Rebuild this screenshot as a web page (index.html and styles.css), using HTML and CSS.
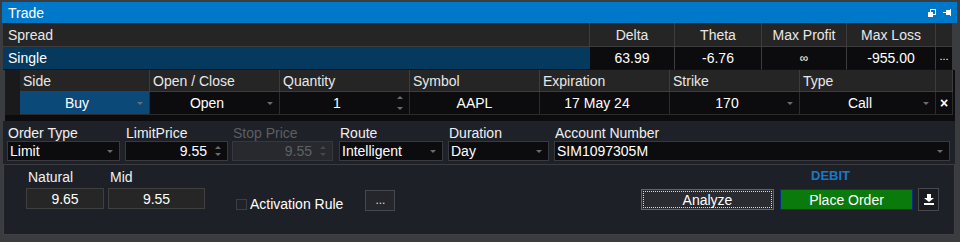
FILE: index.html
```html
<!DOCTYPE html>
<html lang="en">
<head>
    <meta charset="UTF-8">
    <title>Trade</title>
    <link rel="stylesheet" href="styles.css">
</head>
<body>

<div class="window">
    <div class="titlebar">
        <span class="title">Trade</span>
        <span class="title-icons">
            <svg width="8" height="8" viewBox="0 0 8 8"><rect x="2.5" y="0.5" width="5" height="5" fill="none" stroke="#fff"/><rect x="0" y="3" width="5" height="5" fill="#fff"/></svg>
            <svg width="8" height="7" viewBox="0 0 8 7"><rect x="0" y="3" width="3" height="1" fill="#fff"/><rect x="3" y="1" width="4" height="5" fill="#fff"/><rect x="7" y="0" width="1" height="7" fill="#fff"/></svg>
        </span>
    </div>

    <div class="summary">
        <div class="s-head s-name">Spread</div>
        <div class="s-head">Delta</div>
        <div class="s-head">Theta</div>
        <div class="s-head">Max Profit</div>
        <div class="s-head">Max Loss</div>
        <div class="s-head"></div>

        <div class="s-name s-sel">Single</div>
        <div class="s-val">63.99</div>
        <div class="s-val">-6.76</div>
        <div class="s-val s-inf">&infin;</div>
        <div class="s-val">-955.00</div>
        <div class="s-val s-more">...</div>
    </div>

    <div class="legs">
        <div class="gutter"></div>
        <div class="l-head">Side</div>
        <div class="l-head">Open / Close</div>
        <div class="l-head">Quantity</div>
        <div class="l-head">Symbol</div>
        <div class="l-head">Expiration</div>
        <div class="l-head">Strike</div>
        <div class="l-head">Type</div>
        <div class="l-head"></div>

        <div class="gutter"></div>
        <div class="l-cell l-pick l-buy">Buy<i class="caret"></i></div>
        <div class="l-cell l-pick">Open<i class="caret"></i></div>
        <div class="l-cell l-pick">1<i class="spin"><b class="up"></b><b class="down"></b></i></div>
        <div class="l-cell">AAPL</div>
        <div class="l-cell l-pick">17 May 24</div>
        <div class="l-cell l-pick">170<i class="caret"></i></div>
        <div class="l-cell l-pick">Call<i class="caret"></i></div>
        <div class="l-cell l-x">&times;</div>
    </div>

    <div class="order">
        <div class="field f-type">
            <label>Order Type</label>
            <div class="box">Limit<i class="caret"></i></div>
        </div>
        <div class="field f-limit">
            <label>LimitPrice</label>
            <div class="box num">9.55<i class="spin"><b class="up"></b><b class="down"></b></i></div>
        </div>
        <div class="field f-stop disabled">
            <label>Stop Price</label>
            <div class="box num">9.55<i class="spin"><b class="up"></b><b class="down"></b></i></div>
        </div>
        <div class="field f-route">
            <label>Route</label>
            <div class="box">Intelligent<i class="caret"></i></div>
        </div>
        <div class="field f-dur">
            <label>Duration</label>
            <div class="box">Day<i class="caret"></i></div>
        </div>
        <div class="field f-acct">
            <label>Account Number</label>
            <div class="box">SIM1097305M<i class="caret"></i></div>
        </div>
    </div>

    <div class="bottom">
        <div class="quote">
            <label>Natural</label>
            <div class="qbox">9.65</div>
        </div>
        <div class="quote q-mid">
            <label>Mid</label>
            <div class="qbox">9.55</div>
        </div>
        <div class="activation">
            <span class="check"></span>
            <span>Activation Rule</span>
        </div>
        <div class="dots">...</div>

        <div class="actions">
            <div class="debit">DEBIT</div>
            <div class="buttons">
                <div class="btn btn-analyze"><span>Analyze</span></div>
                <div class="btn btn-place">Place Order</div>
                <div class="btn-icon">
                    <svg width="10" height="11" viewBox="0 0 10 11"><path d="M3 0h4v4h3L5 8 0 4h3z" fill="#fff"/><rect x="0" y="9" width="10" height="2" fill="#fff"/></svg>
                </div>
            </div>
        </div>
    </div>
</div>

</body>
</html>
```

FILE: styles.css
```css
body {
    margin: 0;
    background: #3a3b3f;
    font-family: "Liberation Sans", Arial, sans-serif;
    font-size: 14px;
    color: #eee;
}
.window {
    width: 960px;
    height: 242px;
    box-sizing: border-box;
    padding: 2px 5px 0 2px;
    background: #3b3c40;
    overflow: hidden;
}
.titlebar {
    height: 21px;
    background: #0078c9;
    display: flex;
    align-items: center;
    justify-content: space-between;
    padding: 0 6px 0 6px;
    margin-right: -2px;
}
.title {
    color: #fff;
    font-size: 14px;
}
.title-icons {
    display: flex;
    gap: 7px;
    align-items: center;
}

/* spread summary */
.summary {
    display: grid;
    grid-template-columns: 587px 85px 87px 85px 89px 17px;
    grid-template-rows: 24px 23px;
    margin-left: 1px;
}
.summary > div {
    display: flex;
    align-items: center;
    justify-content: center;
    box-sizing: border-box;
}
.s-head {
    background: #252525;
    border-right: 1px solid #3d3d3d;
    border-bottom: 1px solid #3d3d3d;
    color: #e8e8e8;
}
.summary .s-name {
    justify-content: flex-start;
    padding-left: 5px;
}
.s-sel {
    background: #053a5e;
    color: #fff;
    border-bottom: 1px solid #111;
}
.s-val {
    background: #0c0c0e;
    color: #fff;
    border-right: 1px solid #3d3d3d;
    border-bottom: 1px solid #111;
}
.s-inf {
    font-size: 12px;
}
.s-more {
    font-size: 11px;
    align-items: flex-start !important;
    padding-top: 3px;
}

/* legs */
.legs {
    display: grid;
    grid-template-columns: 15px 130px 130px 130px 130px 130px 130px 136px 17px;
    grid-template-rows: 22px 23px;
    margin-left: 3px;
    background: #0c0c0e;
    padding-bottom: 6px;
}
.gutter {
    background: #1a1a1c;
}
.l-head {
    background: #252525;
    border-right: 1px solid #3d3d3d;
    border-bottom: 1px solid #3d3d3d;
    display: flex;
    align-items: center;
    padding-left: 3px;
    color: #e8e8e8;
}
.l-cell {
    position: relative;
    display: flex;
    align-items: center;
    justify-content: center;
    border-right: 1px solid #2c2c2c;
    border-bottom: 1px solid #2c2c2c;
    color: #fff;
}
.l-pick {
    padding-right: 15px;
}
.l-buy {
    background: #0b4a78;
}
.l-x {
    font-size: 14px;
    font-weight: bold;
}
.caret {
    position: absolute;
    right: 6px;
    top: 50%;
    margin-top: -1px;
    border-left: 3px solid transparent;
    border-right: 3px solid transparent;
    border-top: 3px solid #6c6c6c;
}
.spin {
    position: absolute;
    right: 6px;
    top: 4px;
    bottom: 4px;
    display: flex;
    flex-direction: column;
    justify-content: space-between;
}
.spin b {
    display: block;
    border-left: 3px solid transparent;
    border-right: 3px solid transparent;
}
.spin .up {
    border-bottom: 3px solid #6c6c6c;
}
.spin .down {
    border-top: 3px solid #6c6c6c;
}

/* order fields */
.order {
    display: flex;
    gap: 4px;
    padding: 3px 0 3px 4px;
    background: #1f2128;
    border-bottom: 1px solid #3a3c42;
    margin-left: 1px;
}
.field {
    display: flex;
    flex-direction: column;
}
.field label {
    height: 17px;
    line-height: 18px;
    padding-left: 1px;
    color: #f0f0f0;
}
.box {
    position: relative;
    height: 20px;
    box-sizing: border-box;
    border: 1px solid #3a3a3e;
    background: #0c0c0f;
    display: flex;
    align-items: center;
    padding-left: 2px;
    color: #fff;
}
.box.num {
    justify-content: flex-end;
    padding-right: 20px;
}
.f-type { width: 113px; }
.f-limit { width: 103px; margin-left: 1px; }
.f-stop { width: 101px; }
.f-route { width: 104px; margin-left: 2px; }
.f-dur { width: 101px; margin-left: 1px; }
.f-acct { width: 396px; margin-left: 1px; }
.disabled label {
    color: #5c5e63;
}
.disabled .box {
    background: #27292e;
    color: #5f6166;
    border-color: #36383d;
}
.disabled .spin b {
    border-top-color: #45474b;
    border-bottom-color: #45474b;
}

/* bottom area */
.bottom {
    height: 70px;
    box-sizing: border-box;
    background: #1e2027;
    border: 1px solid #3f4147;
    border-top: none;
    margin-left: 1px;
    display: flex;
    align-items: flex-start;
    padding: 4px 0 0 22px;
}
.quote {
    display: flex;
    flex-direction: column;
}
.quote label {
    height: 18px;
    padding-left: 2px;
    color: #f0f0f0;
}
.qbox {
    width: 78px;
    height: 21px;
    box-sizing: border-box;
    margin-top: 1px;
    background: #262626;
    border: 1px solid #404040;
    display: flex;
    align-items: center;
    justify-content: center;
    color: #fff;
}
.q-mid {
    margin-left: 4px;
}
.q-mid .qbox {
    width: 97px;
}
.activation {
    display: flex;
    align-items: center;
    gap: 3px;
    margin: 27px 0 0 31px;
    color: #fff;
}
.check {
    width: 9px;
    height: 9px;
    border: 1px solid #3c3e44;
    background: #202228;
}
.dots {
    width: 30px;
    height: 21px;
    box-sizing: border-box;
    margin: 21px 0 0 22px;
    border: 1px solid #45474d;
    background: #24262b;
    display: flex;
    justify-content: center;
    color: #ddd;
    font-size: 12px;
    line-height: 18px;
}
.actions {
    margin-left: auto;
    margin-right: 15px;
    display: flex;
    flex-direction: column;
}
.debit {
    padding-left: 170px;
    height: 19px;
    color: #1b78c6;
    font-weight: bold;
    font-size: 13px;
    line-height: 14px;
}
.buttons {
    display: flex;
    align-items: center;
}
.btn {
    width: 133px;
    height: 21px;
    box-sizing: border-box;
    display: flex;
    align-items: center;
    justify-content: center;
    color: #fff;
}
.btn-analyze {
    background: #2a2b30;
    border: 1px solid #1e78c8;
    padding: 1px;
}
.btn-analyze span {
    width: 100%;
    height: 100%;
    box-sizing: border-box;
    border: 1px dotted #ddd;
    display: flex;
    align-items: center;
    justify-content: center;
}
.btn-place {
    margin-left: 6px;
    background: #0a7a0c;
    border: 1px solid #0b2d8a;
}
.btn-icon {
    margin-left: 5px;
    width: 21px;
    height: 23px;
    box-sizing: border-box;
    border: 1px solid #46484d;
    background: #1a1b1f;
    display: flex;
    align-items: center;
    justify-content: center;
}
```
